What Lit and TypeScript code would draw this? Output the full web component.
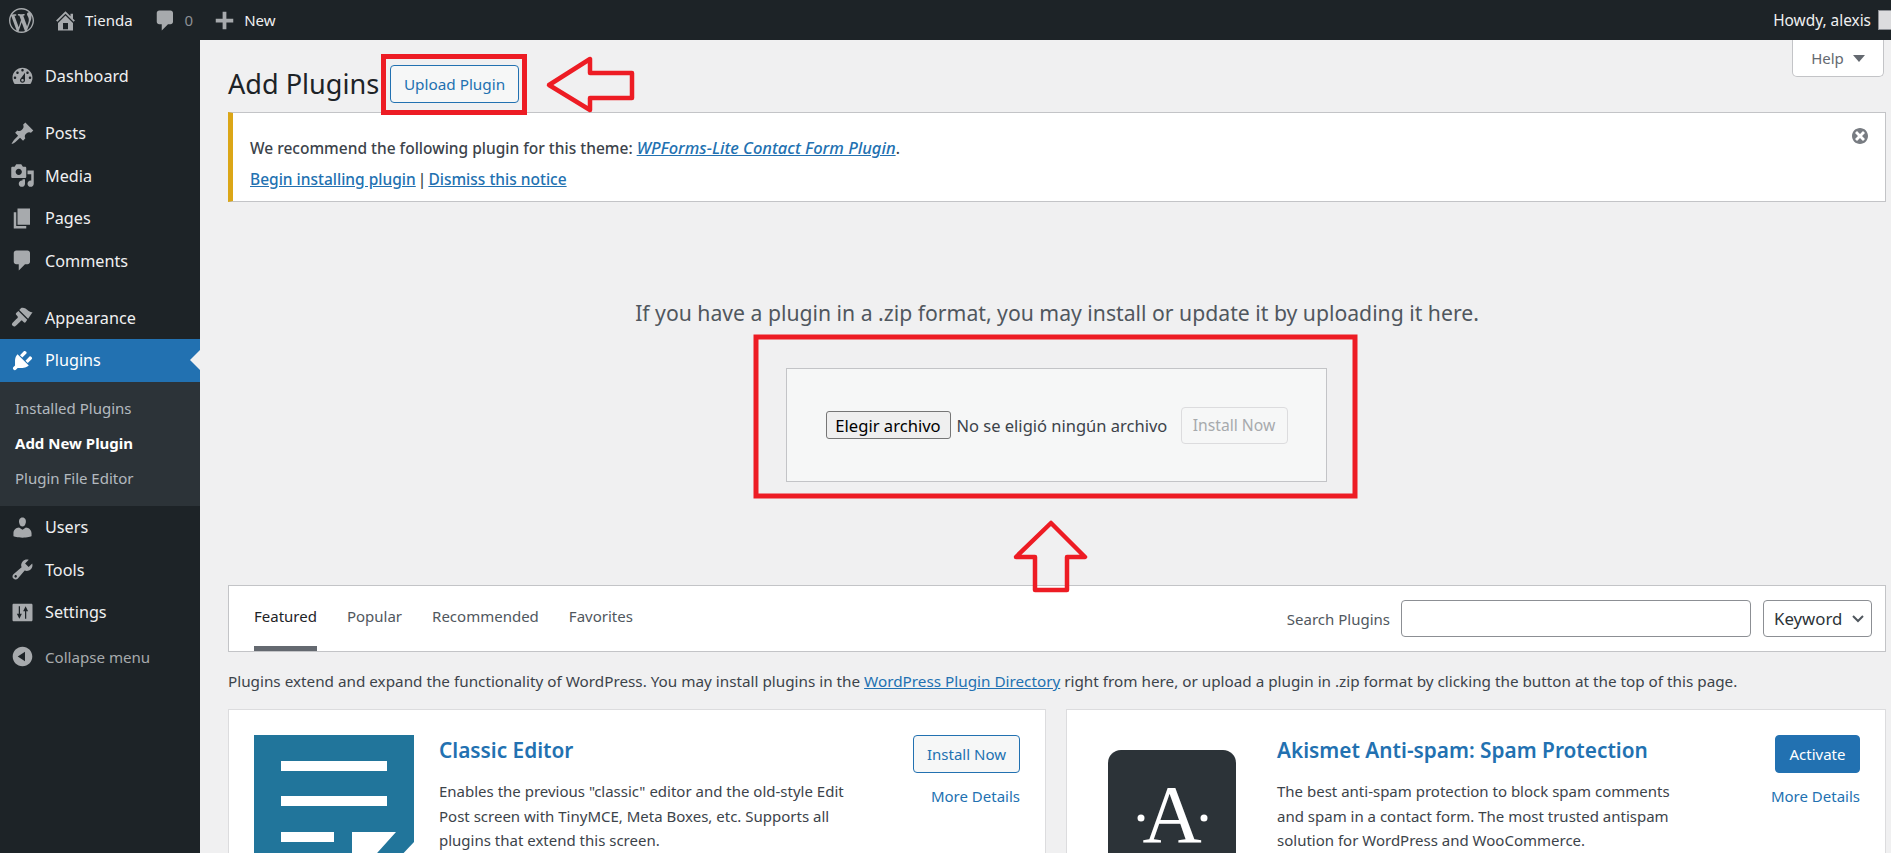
import { LitElement, html, css, svg } from "lit";
import { customElement } from "lit/decorators.js";

const P: Record<string, string> = {
  wp: "M20 10c0-5.51-4.49-10-10-10C4.48 0 0 4.49 0 10c0 5.52 4.48 10 10 10 5.51 0 10-4.48 10-10zM7.78 15.37L4.37 6.22c.55-.02 1.17-.08 1.17-.08.5-.06.44-1.13-.06-1.11 0 0-1.45.11-2.37.11-.18 0-.37 0-.58-.01C4.12 2.69 6.87 1.11 10 1.11c2.33 0 4.45.87 6.05 2.34-.68-.11-1.65.39-1.65 1.58 0 .74.45 1.36.9 2.1.35.61.55 1.36.55 2.46 0 1.49-1.4 5-1.4 5l-3.03-8.37c.54-.02.82-.17.82-.17.5-.05.44-1.25-.06-1.22 0 0-1.44.12-2.38.12-.87 0-2.33-.12-2.33-.12-.5-.03-.56 1.2-.06 1.22l.92.08 1.26 3.41zM17.41 10c.24-.64.74-1.87.43-4.25.7 1.29 1.05 2.71 1.05 4.25 0 3.29-1.73 6.24-4.4 7.78.97-2.59 1.94-5.2 2.92-7.78zM6.1 18.09C3.12 16.65 1.11 13.53 1.11 10c0-1.3.23-2.48.72-3.59C3.25 10.3 4.67 14.2 6.1 18.09zm4.03-6.63l2.58 6.98c-.86.29-1.76.45-2.71.45-.79 0-1.57-.11-2.29-.33.81-2.38 1.62-4.74 2.42-7.1z",
  home: "M16 8.5l1.53 1.53-1.06 1.06L10 4.62l-6.47 6.47-1.06-1.06L10 2.5l4 4v-2h2v4zm-6-2.46l6 5.99V18H4v-5.97zM12 17v-5H8v5h4z",
  comment: "M5 2h9c1.1 0 2 .9 2 2v7c0 1.1-.9 2-2 2h-2l-5 5v-5H5c-1.1 0-2-.9-2-2V4c0-1.1.9-2 2-2z",
  plus: "M17 8.5v3h-5.5V17h-3v-5.5H3v-3h5.5V3h3v5.5z",
  dashboard: "M3.76 16h12.48c1.1-1.37 1.76-3.11 1.76-5 0-4.42-3.58-8-8-8s-8 3.58-8 8c0 1.89.66 3.63 1.76 5zM10 4c.55 0 1 .45 1 1s-.45 1-1 1-1-.45-1-1 .45-1 1-1zM6 6c.55 0 1 .45 1 1s-.45 1-1 1-1-.45-1-1 .45-1 1-1zm8 0c.55 0 1 .45 1 1s-.45 1-1 1-1-.45-1-1 .45-1 1-1zm-5.37 5.55L12 7v6c0 1.1-.9 2-2 2s-2-.9-2-2c0-.57.24-1.08.63-1.45zM4 10c.55 0 1 .45 1 1s-.45 1-1 1-1-.45-1-1 .45-1 1-1zm12 0c.55 0 1 .45 1 1s-.45 1-1 1-1-.45-1-1 .45-1 1-1zm-5 3c0-.55-.45-1-1-1s-1 .45-1 1 .45 1 1 1 1-.45 1-1z",
  post: "M10.44 3.02l1.82-1.82 6.36 6.35-1.83 1.82c-1.05-.68-2.48-.57-3.41.36l-.75.75c-.92.93-1.04 2.35-.35 3.41l-1.83 1.82-2.41-2.41-2.8 2.79c-.42.42-3.38 2.71-3.8 2.29s1.86-3.39 2.28-3.81l2.79-2.79L4.1 9.36l1.83-1.82c1.05.69 2.48.57 3.4-.36l.75-.75c.93-.92 1.05-2.35.36-3.41z",
  media: "M13 11V4c0-.55-.45-1-1-1h-1.67L9 1H5L3.67 3H2c-.55 0-1 .45-1 1v7c0 .55.45 1 1 1h10c.55 0 1-.45 1-1zM7 4.5c1.38 0 2.5 1.12 2.5 2.5S8.38 9.5 7 9.5 4.5 8.38 4.5 7 5.62 4.5 7 4.5zM14 6h5v10.5c0 1.38-1.12 2.5-2.5 2.5S14 17.88 14 16.5s1.12-2.5 2.5-2.5c.17 0 .34.02.5.05V9h-3V6zm-4 8.05V13h2v3.5c0 1.38-1.12 2.5-2.5 2.5S7 17.88 7 16.5 8.12 14 9.5 14c.17 0 .34.02.5.05z",
  page: "M6 15V2h10v13H6zm-1 1h8v2H3V5h2v11z",
  appearance: "M14.48 11.06L7.41 3.99l1.5-1.5c.5-.56 2.3-.47 3.51.32 1.21.8 1.43 1.28 2.91 2.1 1.18.64 2.45 1.26 2.7.85zM13.77 11.77L6.7 4.7 4.93 6.47c-.39.39-.39 1.02 0 1.41l1.06 1.06c.39.39.39 1.03 0 1.42-.6.6-4.5 3.9-4.5 5.1 0 .8 1.1 1.8 2 1.8 1.1 0 4.5-3.9 5.1-4.5.39-.39 1.02-.39 1.41 0l1.06 1.06c.39.39 1.02.39 1.41 0z",
  plugins: "M13.11 4.36L9.87 7.6 8 5.73l3.24-3.24c.35-.34 1.05-.2 1.56.32.52.51.66 1.21.31 1.55zm-8 1.77l.91-1.12 9.01 9.01-1.19.84c-.71.71-2.63 1.16-3.82 1.16H6.14L4.9 17.26c-.59.59-1.54.59-2.12 0-.59-.58-.59-1.53 0-2.12l1.24-1.24v-3.88c0-1.13.4-3.19 1.09-3.89zm7.26 3.97l3.24-3.24c.34-.35 1.04-.21 1.55.31.52.51.66 1.21.31 1.55l-3.24 3.25z",
  users: "M10 9.25c-2.27 0-2.73-3.44-2.73-3.44C7 4.02 7.82 2 9.97 2c2.16 0 2.98 2.02 2.71 3.81 0 0-.41 3.44-2.68 3.44zm0 2.57L12.72 10c2.39 0 4.52 2.33 4.52 4.53v2.49s-3.65 1.13-7.24 1.13c-3.65 0-7.24-1.13-7.24-1.13v-2.49c0-2.25 1.94-4.48 4.47-4.48z",
  tools: "M16.68 9.77c-1.34 1.34-3.3 1.67-4.95.99l-5.41 6.52c-.99.99-2.59.99-3.58 0s-.99-2.59 0-3.57l6.52-5.42c-.68-1.65-.35-3.61.99-4.95 1.28-1.28 3.12-1.62 4.72-1.06l-2.89 2.89 2.82 2.82 2.86-2.87c.53 1.58.18 3.39-1.08 4.65zM3.81 16.21c.4.39 1.04.39 1.43 0 .4-.4.4-1.04 0-1.43-.39-.4-1.03-.4-1.43 0-.39.39-.39 1.03 0 1.43z",
  settings: "M18 16V4c0-.55-.45-1-1-1H3c-.55 0-1 .45-1 1v12c0 .55.45 1 1 1h14c.55 0 1-.45 1-1zM7 5h1v6h1.5L7.5 15 5.5 11H7zM12 15V9h-1.5l2-4 2 4H13v6z",
  collapse: "M10 2.16c4.33 0 7.84 3.51 7.84 7.84s-3.51 7.84-7.84 7.84S2.16 14.33 2.16 10 5.71 2.16 10 2.16zm2 11.72V6.12L6.18 9.97z",
  dismiss: "M10 2c4.42 0 8 3.58 8 8s-3.58 8-8 8-8-3.58-8-8 3.58-8 8-8zm5 11l-3-3 3-3-2-2-3 3-3-3-2 2 3 3-3 3 2 2 3-3 3 3z",
};

const icon = (n: string, cls = "") =>
  html`<svg class="ic ${cls}" viewBox="0 0 20 20" fill-rule="evenodd"><path d=${P[n]}></path></svg>`;

@customElement("app-root")
export class AppRoot extends LitElement {
  static styles = css`
    :host { display: block; position: relative; width: 1891px; height: 853px; overflow: hidden; background: #f0f0f1;
      font-family: "Noto Sans", "Open Sans", sans-serif; font-size: 15px; color: #3c434a; }
    * { box-sizing: border-box; }
    a { color: #2271b1; }
    .ic { width: 25px; height: 25px; fill: #a7aaad; flex: none; display: block; }

    .bar { height: 40px; background: #1d2327; color: #f0f0f1; display: flex; align-items: center; padding-left: 9px; font-size: 15px; white-space: nowrap; }
    .bar .logo { width: 25px; height: 25px; fill: #a7aaad; }
    .bar .home { margin-left: 19px; width: 25px; height: 25px; }
    .bar .tienda { margin-left: 7px; }
    .bar .cm { margin-left: 20px; width: 25px; height: 25px; }
    .bar .cnt { margin-left: 7px; color: #8c8f94; }
    .bar .pl { margin-left: 19px; width: 25px; height: 25px; }
    .bar .new { margin-left: 7px; }
    .howdy { margin-left: auto; display: flex; align-items: center; gap: 7px; margin-right: -7px; font-size: 15.4px; }
    .avatar { width: 20px; height: 20px; background: #dcdcde; border: 1px solid #8c8f94; flex: none; display:block; }

    .body { display: flex; height: 813px; }
    .side { width: 200px; flex: none; background: #1d2327; padding-top: 15px; color: #f0f0f1; font-size: 16.2px; }
    .item { height: 42.5px; display: flex; align-items: center; padding-left: 10px; gap: 10px; position: relative; white-space: nowrap; }
    .item.sep { margin-top: 14.5px; }
    .item.cur { background: #2271b1; color: #fff; }
    .item.cur .ic { fill: #fff; }
    .notch { position: absolute; right: 0; top: 50%; margin-top: -10px; border: 10px solid transparent; border-left-width: 0; border-right-color: #f0f0f1; }
    .sub { background: #2c3338; padding: 9px 0 10.5px; font-size: 15px; color: rgba(240,246,252,.7); }
    .sub div { height: 35px; display: flex; align-items: center; padding-left: 15px; white-space: nowrap; }
    .sub .on { color: #fff; font-weight: 700; }
    .collapse { color: #a7aaad; font-size: 15.1px; margin-top: 2px; }

    .main { flex: 1; min-width: 0; padding: 25px 5px 0 28px; position: relative; }
    .help { position: absolute; right: 7px; top: 0; width: 92px; height: 37px; background: #fff; border: 1px solid #c3c4c7; border-top: none; border-radius: 0 0 5px 5px; display: flex; align-items: center; justify-content: center; gap: 9px; color: #646970; }
    .help i { border: 6px solid transparent; border-top: 7px solid #646970; border-bottom: none; display: block; }
    .head { display: flex; align-items: center; height: 38px; gap: 9px; }
    h1 { margin: 0; font-size: 27.1px; font-weight: 400; color: #1d2327; line-height: 38px; width: 153px; white-space: nowrap; }
    .btn { border: 1px solid #2271b1; color: #2271b1; background: #f6f7f7; border-radius: 4px; height: 37px; display: inline-flex; align-items: center; justify-content: center; font: inherit; padding: 0; white-space: nowrap; }
    .upload { width: 129px; height: 38px; font-size: 15.3px; }
    .notice { margin-top: 9px; height: 90px; background: #fff; border: 1px solid #c3c4c7; border-left: 5px solid #dba617; position: relative; font-weight: 500; font-size: 15.5px; }
    .notice div { position: absolute; left: 17px; white-space: nowrap; }
    .notice .l1 { top: 23px; } .notice .l2 { top: 55px; }
    .notice em { font-size: 16.5px; }
    .pipe { margin: 0 -2px; }
    .notice .x { position: absolute; right: 15px; top: 13px; width: 20px; height: 20px; fill: #787c82; }
    .lead { margin: 96px 0 0; height: 30px; line-height: 30px; text-align: center; font-size: 21.2px; color: #50575e; white-space: nowrap; }
    .form { margin: 40px auto 0; width: 541px; height: 114px; background: #f6f7f7; border: 1px solid #c3c4c7; display: flex; align-items: center; padding-left: 39px; white-space: nowrap; position: relative; left: -1px; }
    .choose { height: 28px; width: 125px; border: 1px solid #767676; border-radius: 3px; background: #efefef; color: #000; font: 16.6px "Noto Sans", sans-serif; padding: 0; }
    .none { margin-left: 6px; width: 224px; color: #3c434a; font-size: 16.5px; }
    .dis { width: 107px; border-color: #dcdcde; color: #a7aaad; font-size: 15.7px; }
    .tabs { margin-top: 103px; height: 67px; background: #fff; border: 1px solid #c3c4c7; display: flex; padding-left: 25px; align-items: stretch; color: #50575e; position: relative; }
    .tab { margin-right: 30px; padding-top: 20px; white-space: nowrap; }
    .tab.on { color: #1d2327; border-bottom: 5px solid #646970; }
    .search { margin-left: auto; display: flex; align-items: center; padding-right: 13px; gap: 11px; }
    .input { width: 350px; height: 37px; border: 1px solid #8c8f94; border-radius: 4px; background: #fff; display:block; }
    .sel { width: 109px; height: 37px; margin-left: 1px; border: 1px solid #8c8f94; border-radius: 4px; padding-left: 10px; display: flex; align-items: center; justify-content: space-between; padding-right: 6px; color: #2c3338; font-size: 16.8px; }
    .sel svg { width: 14px; height: 10px; fill: none; stroke: #50575e; stroke-width: 2; display: block; }
    .desc { margin: 17px 0 16px; line-height: 24px; color: #3c434a; font-size: 15.28px; }
    .cards { display: grid; grid-template-columns: 818px 820px; gap: 20px; }
    .card { background: #fff; border: 1px solid #dcdcde; height: 300px; padding: 25px; display: grid; grid-template-columns: 160px 1fr auto; column-gap: 25px; }
    .thumb { width: 160px; height: 160px; display: block; }
    .thumb2 { width: 128px; height: 128px; margin: 15px 16px 0; display: block; }
    h3 { margin: 0; font-size: 20.8px; font-weight: 600; color: #2271b1; line-height: 30px; white-space: nowrap; }
    .txt p { margin: 14px 0 0; line-height: 24.5px; white-space: nowrap; color: #3c434a; }
    .act { display: flex; flex-direction: column; align-items: flex-end; }
    .act .btn { height: 38px; }
    .install { width: 107px; }
    .activate { width: 85px; background: #2271b1; color: #fff; }
    .act a { margin-top: 11px; line-height: 24px; text-decoration: none; }
    .marks { position: absolute; left: 0; top: 0; width: 1891px; height: 853px; pointer-events: none; fill: none; stroke: #ed1c24; }
  `;

  private navItem(i: string, t: string, extra = "") {
    return html`<div class="item ${extra}">${icon(i)}<span>${t}</span></div>`;
  }

  render() {
    return html`
      <div class="bar">
        ${icon("wp", "logo")}${icon("home", "home")}<span class="tienda">Tienda</span>
        ${icon("comment", "cm")}<span class="cnt">0</span>
        ${icon("plus", "pl")}<span class="new">New</span>
        <span class="howdy">Howdy, alexis<i class="avatar"></i></span>
      </div>
      <div class="body">
        <nav class="side">
          ${this.navItem("dashboard", "Dashboard")}
          ${this.navItem("post", "Posts", "sep")}
          ${this.navItem("media", "Media")}
          ${this.navItem("page", "Pages")}
          ${this.navItem("comment", "Comments")}
          ${this.navItem("appearance", "Appearance", "sep")}
          <div class="item cur">${icon("plugins")}<span>Plugins</span><i class="notch"></i></div>
          <div class="sub">
            <div>Installed Plugins</div>
            <div class="on">Add New Plugin</div>
            <div>Plugin File Editor</div>
          </div>
          ${this.navItem("users", "Users")}
          ${this.navItem("tools", "Tools")}
          ${this.navItem("settings", "Settings")}
          ${this.navItem("collapse", "Collapse menu", "collapse")}
        </nav>
        <main class="main">
          <div class="help">Help<i></i></div>
          <div class="head"><h1>Add Plugins</h1><button class="btn upload">Upload Plugin</button></div>
          <div class="notice">
            <div class="l1">We recommend the following plugin for this theme: <a href="#"><em>WPForms-Lite Contact Form Plugin</em></a>.</div>
            <div class="l2"><a href="#">Begin installing plugin</a> <span class="pipe">|</span> <a href="#">Dismiss this notice</a></div>
            ${icon("dismiss", "x")}
          </div>
          <p class="lead">If you have a plugin in a .zip format, you may install or update it by uploading it here.</p>
          <div class="form">
            <button class="choose">Elegir archivo</button>
            <span class="none">No se eligió ningún archivo</span>
            <button class="btn dis">Install Now</button>
          </div>
          <div class="tabs">
            <div class="tab on">Featured</div>
            <div class="tab">Popular</div>
            <div class="tab">Recommended</div>
            <div class="tab">Favorites</div>
            <div class="search">
              <span>Search Plugins</span>
              <input class="input" />
              <div class="sel">Keyword<svg viewBox="0 0 14 10"><path d="M2 2l5 5 5-5"></path></svg></div>
            </div>
          </div>
          <div class="desc">Plugins extend and expand the functionality of WordPress. You may install plugins in the <a href="#">WordPress Plugin Directory</a> right from here, or upload a plugin in .zip format by clicking the button at the top of this page.</div>
          <div class="cards">
            <div class="card">
              <svg class="thumb" viewBox="0 0 160 160">
                <path fill="#21759b" d="M0 0h160v107l-50 53H0z"></path>
                <path fill="#fff" d="M27 26h106v10H27zM27 61h106v10H27zM27 97h53v10H27zM98 97h44l-36 40H98z"></path>
              </svg>
              <div class="txt"><h3>Classic Editor</h3>
                <p>Enables the previous "classic" editor and the old-style Edit<br />Post screen with TinyMCE, Meta Boxes, etc. Supports all<br />plugins that extend this screen.</p></div>
              <div class="act"><button class="btn install">Install Now</button><a href="#">More Details</a></div>
            </div>
            <div class="card">
              <svg class="thumb2" viewBox="0 0 128 128">
                <rect width="128" height="128" rx="13" fill="#2c3338"></rect>
                <text x="64" y="92" text-anchor="middle" fill="#fff" font-family="Liberation Serif" font-size="82">A</text>
                <circle cx="33" cy="68" r="3.5" fill="#fff"></circle><circle cx="96" cy="68" r="3.5" fill="#fff"></circle>
              </svg>
              <div class="txt"><h3>Akismet Anti-spam: Spam Protection</h3>
                <p>The best anti-spam protection to block spam comments<br />and spam in a contact form. The most trusted antispam<br />solution for WordPress and WooCommerce.</p></div>
              <div class="act"><button class="btn activate">Activate</button><a href="#">More Details</a></div>
            </div>
          </div>
        </main>
      </div>
      <svg class="marks" viewBox="0 0 1891 853">
        ${svg`<rect x="383.5" y="56.5" width="141" height="56" stroke-width="5"></rect>
        <rect x="756" y="337" width="599" height="159" stroke-width="5"></rect>
        <path stroke-width="4.5" stroke-linejoin="round" d="M549 85L590 59V73H632V98H590V110Z"></path>
        <path stroke-width="4.5" stroke-linejoin="round" d="M1051 523L1085 557H1067V590H1035V557H1016Z"></path>`}
      </svg>
    `;
  }
}
